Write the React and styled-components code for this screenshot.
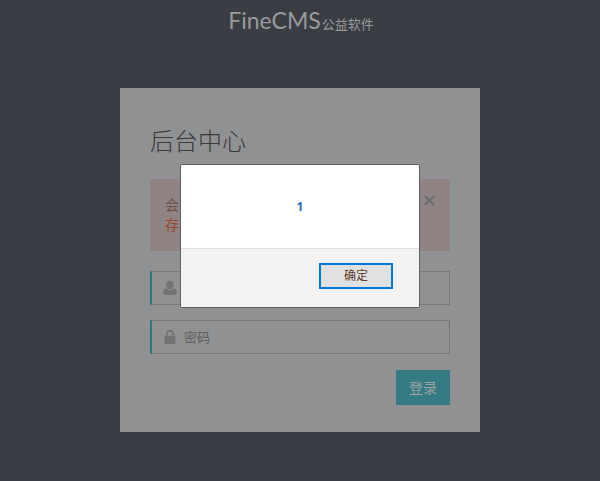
import React from "react";
import styled, { createGlobalStyle } from "styled-components";

const GlobalStyle = createGlobalStyle`
  *, *::before, *::after { box-sizing: border-box; }
  body {
    margin: 0;
    background: #3a3d43;
    font-family: "Open Sans", "Noto Sans CJK SC", sans-serif;
    font-size: 14px;
    line-height: 20px;
    color: #606264;
  }
  button, input { font: inherit; }
`;

const Page = styled.div`
  display: flex;
  flex-direction: column;
  align-items: center;
  min-height: 100vh;
  padding-bottom: 48px;
`;

const Logo = styled.header`
  display: flex;
  align-items: baseline;
  gap: 1px;
  height: 88px;
  padding-top: 5px;
  padding-left: 2px;
  color: #989a9b;
`;

const LogoName = styled.span`
  font-family: Lato, sans-serif;
  font-size: 23px;
  line-height: 30px;
`;

const LogoTag = styled.small`
  font-size: 13px;
  font-weight: 400;
  line-height: 20px;
`;

const Card = styled.form`
  display: flex;
  flex-direction: column;
  width: 60%;
  min-width: 300px;
  padding: 32px 30px 27px;
  background: #8f9192;
`;

const Title = styled.h1`
  margin: 0 0 18px;
  font-size: 24px;
  font-weight: 300;
  line-height: 41px;
  color: #3a3a3d;
`;

const Alert = styled.div`
  display: flex;
  justify-content: space-between;
  align-items: flex-start;
  padding: 16px 15px;
  margin-bottom: 20px;
  background: #8f8483;
`;

const AlertText = styled.p`
  margin: 0;
`;

const AlertLine = styled.span`
  display: block;
  color: ${(p) => (p.$muted ? "#6b4f46" : "#96482f")};
`;

const Dismiss = styled.button`
  display: flex;
  padding: 0;
  border: 0;
  background: none;
  color: #6b6c70;
`;

const Field = styled.label`
  display: flex;
  align-items: center;
  gap: 7px;
  height: 34px;
  margin-bottom: 15px;
  padding: 0 11px;
  border: 1px solid #77797b;
  border-left: 2px solid #2d7880;
  color: #717375;
`;

const FieldInput = styled.input`
  flex: 1;
  min-width: 0;
  padding: 0;
  border: 0;
  outline: 0;
  background: none;
  font-size: 13px;
  line-height: 20px;
  color: #55585b;
  &::placeholder { color: #5c5e60; opacity: 1; }
`;

const LoginButton = styled.button`
  align-self: flex-end;
  height: 35px;
  margin-top: 1px;
  padding: 0 13px;
  border: 0;
  background: #357b83;
  color: #9fa2a3;
  font-size: 14px;
`;

const Overlay = styled.div`
  position: fixed;
  inset: 0;
  display: flex;
  justify-content: center;
  align-items: flex-start;
  padding-top: 164px;
`;

const Dialog = styled.div`
  width: 40%;
  min-width: 240px;
  border: 1px solid #606062;
  border-radius: 2px;
  background: #fff;
  font-size: 12px;
  overflow: hidden;
`;

const Message = styled.p`
  margin: 0;
  padding: 32px 0 31px;
  text-align: center;
  font-weight: 700;
  color: #2a6fa8;
`;

const DialogFooter = styled.div`
  display: flex;
  justify-content: flex-end;
  padding: 14px 26px 18px;
  border-top: 1px solid #dfdfdf;
  background: #f2f2f2;
`;

const ConfirmButton = styled.button`
  width: 74px;
  height: 26px;
  padding: 0;
  border: 2px solid #0078d7;
  background: #e1e1e1;
  color: #5d3b2d;
  font-size: 12px;
  line-height: 20px;
`;

const UserIcon = () => (
  <svg width="14" height="16" viewBox="0 0 14 16" fill="currentColor" aria-hidden="true">
    <ellipse cx="7" cy="5" rx="3.8" ry="4.3" />
    <path d="M3.4 8.2C4.3 9.3 5.6 9.9 7 9.9s2.7-.6 3.6-1.7C13 8.4 14 10.6 14 12.6 14 14.2 13 15 11.8 15H2.2C1 15 0 14.2 0 12.6 0 10.6 1 8.4 3.4 8.2z" />
  </svg>
);

const LockIcon = () => (
  <svg width="14" height="16" viewBox="0 0 14 16" fill="none" aria-hidden="true">
    <rect x="1.5" y="7" width="11" height="8" rx="1" fill="currentColor" />
    <path d="M3.7 8V5.2a3.3 3.3 0 0 1 6.6 0V8" stroke="currentColor" strokeWidth="1.8" />
  </svg>
);

const CloseIcon = () => (
  <svg width="11" height="11" viewBox="0 0 11 11" stroke="currentColor" strokeWidth="2" aria-hidden="true">
    <path d="M1 1l9 9M10 1l-9 9" />
  </svg>
);

export default function App() {
  return (
    <>
      <GlobalStyle />
      <Page>
        <Logo>
          <LogoName>FineCMS</LogoName>
          <LogoTag>公益软件</LogoTag>
        </Logo>
        <Card onSubmit={(e) => e.preventDefault()}>
          <Title>后台中心</Title>
          <Alert role="alert">
            <AlertText>
              <AlertLine $muted>会</AlertLine>
              <AlertLine>存</AlertLine>
            </AlertText>
            <Dismiss type="button" aria-label="关闭">
              <CloseIcon />
            </Dismiss>
          </Alert>
          <Field>
            <UserIcon />
            <FieldInput type="text" aria-label="会员" />
          </Field>
          <Field>
            <LockIcon />
            <FieldInput type="password" placeholder="密码" aria-label="密码" />
          </Field>
          <LoginButton type="submit">登录</LoginButton>
        </Card>
      </Page>
      <Overlay>
        <Dialog role="alertdialog" aria-modal="true" aria-labelledby="message">
          <Message id="message">1</Message>
          <DialogFooter>
            <ConfirmButton type="button">确定</ConfirmButton>
          </DialogFooter>
        </Dialog>
      </Overlay>
    </>
  );
}
